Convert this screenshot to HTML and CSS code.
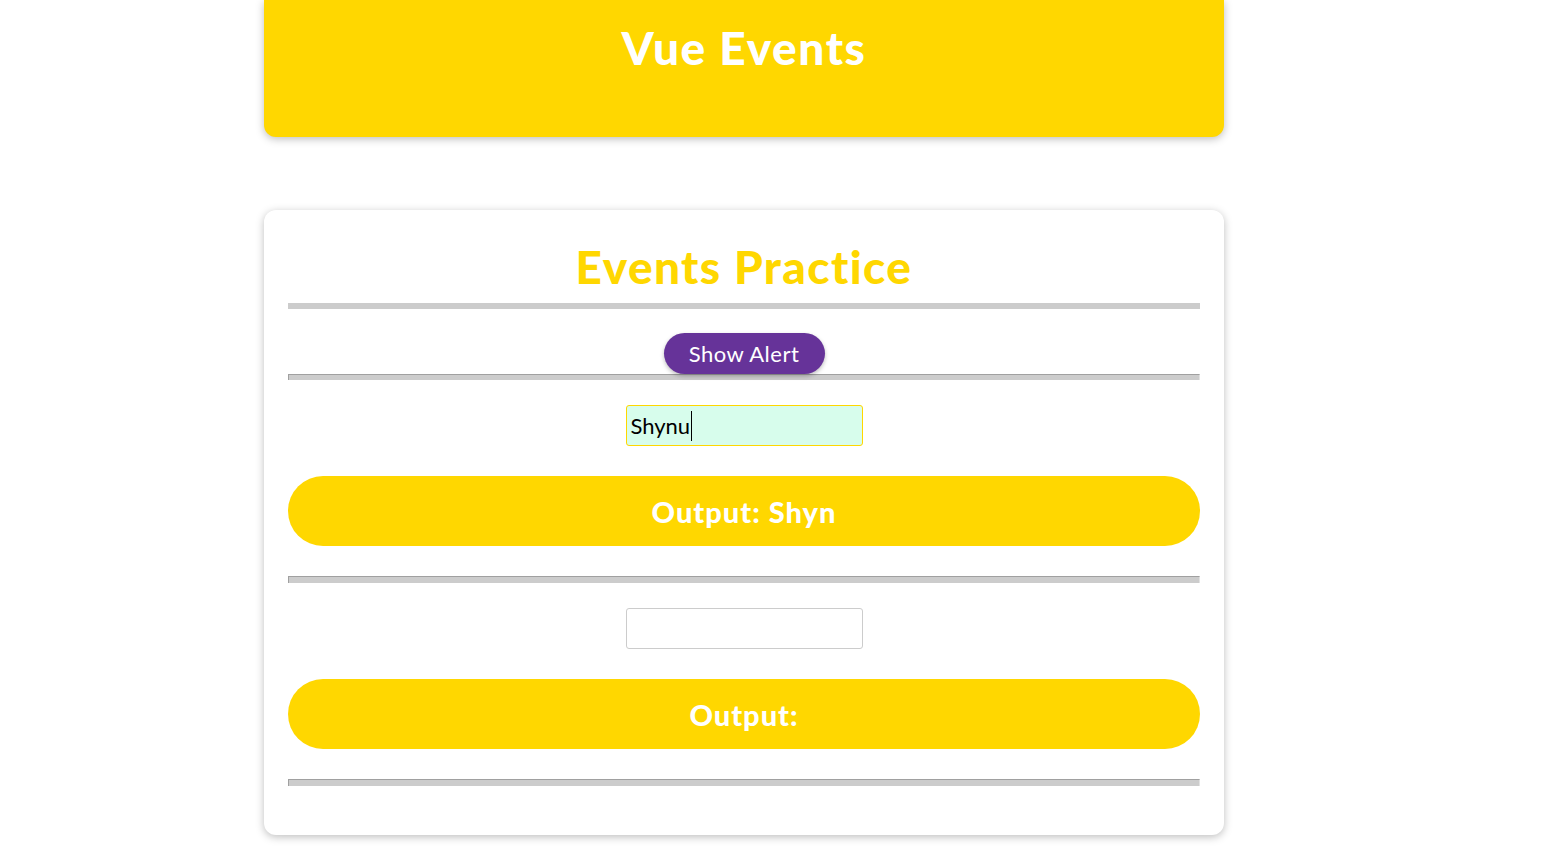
FILE: index.html
```html
<!DOCTYPE html>
<html lang="en">
<head>
<meta charset="utf-8">
<title>Vue Events</title>
<link rel="stylesheet" href="styles.css">
</head>
<body>
  <main class="page">
    <header class="app-header">
      <h1 class="app-title">Vue Events</h1>
    </header>
    <section class="events-card">
      <h2 class="events-title">Events Practice</h2>
      <hr class="title-rule">
      <div class="alert-row">
        <button class="alert-btn" type="button">Show Alert</button>
      </div>
      <hr class="rule">
      <div class="field-row">
        <div class="text-field active"><span class="field-value">Shynu</span><span class="caret"></span></div>
      </div>
      <p class="output">Output: Shyn</p>
      <hr class="rule rule-gap">
      <div class="field-row">
        <div class="text-field"></div>
      </div>
      <p class="output">Output:</p>
      <hr class="rule rule-gap">
    </section>
  </main>
</body>
</html>
```

FILE: styles.css
```css
* { box-sizing: border-box; }

html, body {
  margin: 0;
  padding: 0;
  background: #ffffff;
  font-family: "Lato", "Noto Sans", "DejaVu Sans", sans-serif;
}

.page {
  width: 1488px;
  padding-bottom: 24px;
}

.app-header {
  width: 960px;
  height: 137px;
  margin: 0 auto;
  background: #ffd700;
  border-radius: 0 0 12px 12px;
  box-shadow: 0 2px 8px rgba(0, 0, 0, 0.26);
  padding-top: 20px;
}

.app-title {
  margin: 0;
  text-align: center;
  color: #ffffff;
  font-size: 46px;
  line-height: 56px;
  font-weight: 900;
  letter-spacing: 1.6px;
}

.events-card {
  width: 960px;
  margin: 73px auto 0;
  background: #ffffff;
  border-radius: 12px;
  box-shadow: 0 2px 8px rgba(0, 0, 0, 0.26);
  padding: 29px 24px 49px;
}

.events-title {
  margin: 0 0 8px;
  text-align: center;
  color: #ffd700;
  font-size: 46px;
  line-height: 56px;
  font-weight: 900;
  letter-spacing: 1.4px;
}

.title-rule {
  margin: 0;
  height: 0;
  border: 0;
  border-top: 6px solid #cccccc;
}

.alert-row {
  display: flex;
  justify-content: center;
  padding-top: 24px;
}

.alert-btn {
  width: 161px;
  height: 41px;
  border: none;
  border-radius: 22px;
  background: #663399;
  color: #ffffff;
  font-family: inherit;
  font-size: 22px;
  letter-spacing: 0.5px;
  box-shadow: 0 2px 4px rgba(0, 0, 0, 0.26);
  padding: 0;
}

.rule {
  margin: 0;
  height: 6px;
  background: #cccccc;
  border: 0;
  border-top: 1px solid #a0a0a0;
  border-left: 1px solid #a0a0a0;
  border-right: 1px solid #e2e2e2;
}

.rule-gap {
  margin-top: 30px;
  height: 7px;
}

.field-row {
  display: flex;
  justify-content: center;
  padding-top: 25px;
}

.text-field {
  width: 237px;
  height: 41px;
  border: 1px solid #cccccc;
  border-radius: 3px;
  background: #ffffff;
  display: flex;
  align-items: center;
  padding-left: 4px;
  font-size: 22px;
  color: #000000;
}

.text-field.active {
  background: #d7fdec;
  border-color: #ffd700;
}

.caret {
  width: 1px;
  height: 30px;
  background: #000000;
  margin-left: 1px;
}

.output {
  margin: 30px 0 0;
  height: 70px;
  border-radius: 35px;
  background: #ffd700;
  color: #ffffff;
  font-size: 29px;
  font-weight: 900;
  letter-spacing: 1px;
  display: flex;
  align-items: center;
  justify-content: center;
}
```
